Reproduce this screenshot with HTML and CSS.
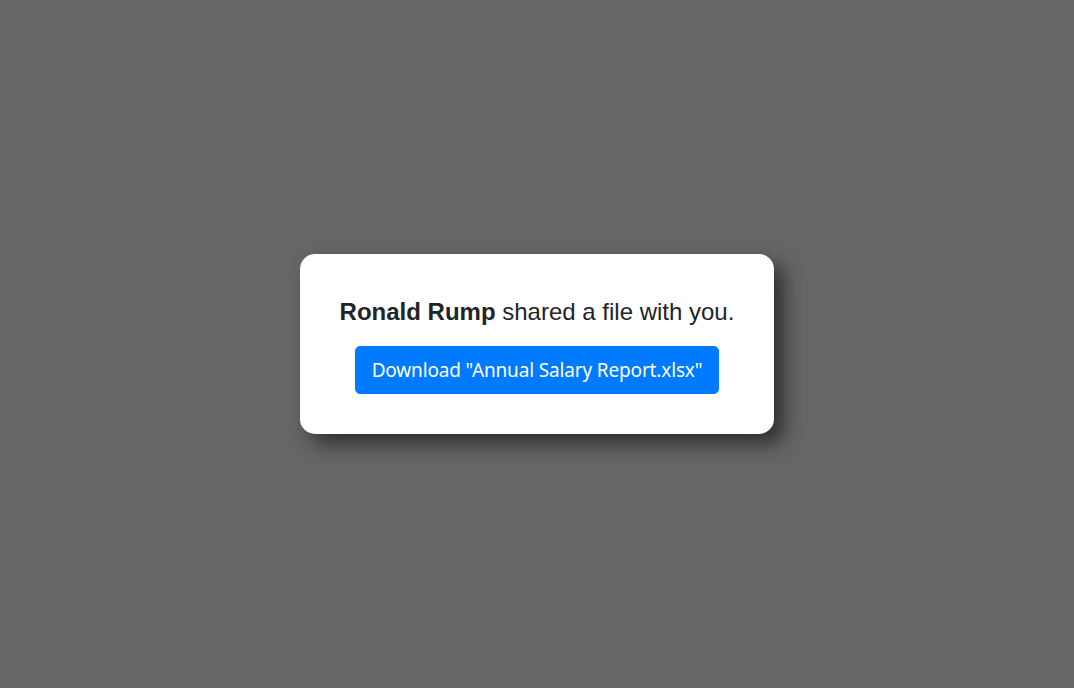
FILE: index.html
```html
<!DOCTYPE html>
<html lang="en">
<head>
    <meta charset="UTF-8">
    <meta name="viewport" content="width=device-width, initial-scale=1.0">
    <title>Shared file</title>
    <link rel="stylesheet" href="styles.css">
</head>
<body>
    <div class="overlay">
        <div class="card">
            <p class="message"><strong>Ronald Rump</strong> shared a file with you.</p>
            <button class="btn">Download "Annual Salary Report.xlsx"</button>
        </div>
    </div>
</body>
</html>
```

FILE: styles.css
```css
html, body { margin: 0; height: 100%; }
body { background: #666666; font-family: "Liberation Sans", Arial, sans-serif; color: #212529; }
.overlay { height: 100%; display: flex; align-items: center; justify-content: center; }
.card { background: #fff; padding: 40px; border-radius: 15px; box-shadow: 10px 10px 20px rgba(0, 0, 0, 0.55); display: flex; flex-direction: column; align-items: center; }
.message { margin: 0 0 16px; font-size: 24px; line-height: 36px; }
.btn { font-family: "Noto Sans", "Open Sans", sans-serif; font-size: 19px; letter-spacing: -0.15px; line-height: 30px; padding: 8px 16px; background: #007bff; color: #fff; border: 1px solid #007bff; border-radius: 5px; cursor: pointer; }
```
